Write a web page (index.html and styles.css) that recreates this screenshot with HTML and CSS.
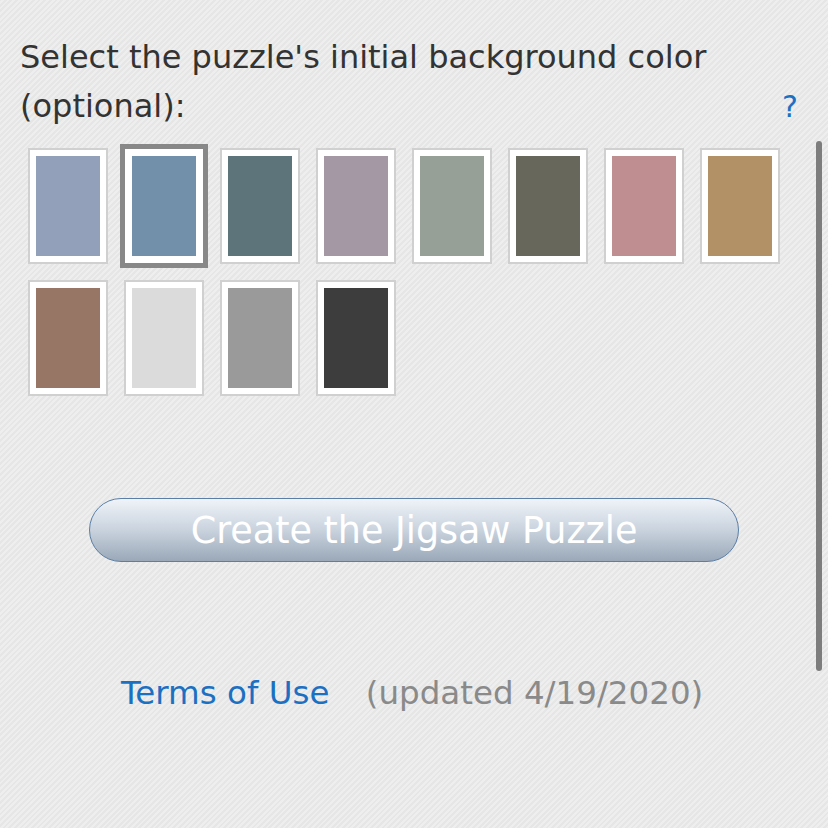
FILE: index.html
```html
<!DOCTYPE html>
<html lang="en">

<head>
    <meta charset="UTF-8">
    <meta name="viewport" content="width=device-width, initial-scale=1.0">
    <title>Create Puzzle</title>
    <link rel="stylesheet" href="styles.css">
</head>

<body>
    <div class="panel">
        <div class="prompt-row">
            <p class="prompt">Select the puzzle's initial background color (optional):</p>
            <a class="help" href="#">?</a>
        </div>

        <!-- Background color choices -->
        <div class="swatches">
            <div class="swatch"><div class="chip" style="background:#92a0ba"></div></div>
            <div class="swatch selected"><div class="chip" style="background:#7390aa"></div></div>
            <div class="swatch"><div class="chip" style="background:#5d747b"></div></div>
            <div class="swatch"><div class="chip" style="background:#a598a5"></div></div>
            <div class="swatch"><div class="chip" style="background:#97a097"></div></div>
            <div class="swatch"><div class="chip" style="background:#67685b"></div></div>
            <div class="swatch"><div class="chip" style="background:#bf8e90"></div></div>
            <div class="swatch"><div class="chip" style="background:#b39166"></div></div>
            <div class="swatch"><div class="chip" style="background:#987665"></div></div>
            <div class="swatch"><div class="chip" style="background:#dbdbdb"></div></div>
            <div class="swatch"><div class="chip" style="background:#9a9a9a"></div></div>
            <div class="swatch"><div class="chip" style="background:#3d3d3d"></div></div>
        </div>

        <div class="actions">
            <button type="button" class="create-btn">Create the Jigsaw Puzzle</button>
        </div>

        <div class="footer">
            <a href="#" class="terms">Terms of Use</a>
            <span class="updated">(updated 4/19/2020)</span>
        </div>
    </div>

    <div class="scrollbar"></div>
</body>

</html>
```

FILE: styles.css
```css
body {
    margin: 0;
    height: 828px;
    overflow: hidden;
    font-family: "DejaVu Sans", Verdana, sans-serif;
    color: #333;
    background-color: #ebebeb;
    background-image: repeating-linear-gradient(-45deg, #eeeeee 0, #eeeeee 2px, #e6e6e6 2px, #e6e6e6 4px);
}

.panel {
    padding: 33px 0 0 20px;
    width: 778px;
}

.prompt-row {
    display: flex;
    align-items: flex-end;
}

.prompt {
    margin: 0;
    flex: 1;
    font-size: 32px;
    line-height: 49px;
}

.help {
    color: #1c70c2;
    text-decoration: none;
    font-size: 30px;
    line-height: 49px;
}

.swatches {
    display: grid;
    grid-template-columns: repeat(8, 80px);
    grid-auto-rows: 116px;
    column-gap: 16px;
    row-gap: 16px;
    margin: 17px 0 0 8px;
}

.swatch {
    border: 2px solid #d0d0d0;
    background-color: #fff;
    padding: 6px;
}

.swatch.selected {
    border: 5px solid #888;
    padding: 7px;
    margin: -4px;
}

.chip {
    height: 100%;
}

.actions {
    margin: 102px 0 0 69px;
}

.create-btn {
    width: 650px;
    height: 64px;
    border: 1px solid #5a7ea6;
    border-radius: 32px;
    background: linear-gradient(#f0f3f9, #c9d3de 50%, #9aa8b8);
    color: #fff;
    font-family: "DejaVu Sans", sans-serif;
    font-size: 36.5px;
    padding: 0;
    cursor: pointer;
}

.footer {
    margin: 112px 0 0 101px;
    font-size: 32.5px;
}

.terms {
    color: #1c70c2;
    text-decoration: none;
    margin-right: 26px;
}

.updated {
    color: #8a8a8a;
}

.scrollbar {
    position: absolute;
    top: 141px;
    left: 816px;
    width: 6px;
    height: 530px;
    border-radius: 3px;
    background-color: #7d7d7d;
}
```
